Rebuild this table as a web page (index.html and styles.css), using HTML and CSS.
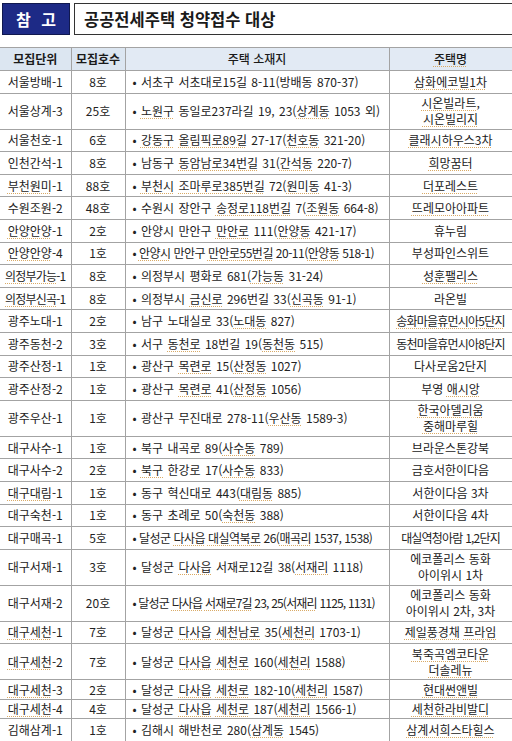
FILE: index.html
```html
<!DOCTYPE html>
<html lang="ko">
<head>
<meta charset="utf-8">
<title>공공전세주택 청약접수 대상</title>
<link rel="stylesheet" href="styles.css">
</head>
<body>
<div class="page">
  <div class="head">
    <div class="tag">참 고</div>
    <div class="title">공공전세주택 청약접수 대상</div>
  </div>
  <table class="list">
    <colgroup>
      <col class="c1"><col class="c2"><col class="c3"><col class="c4">
    </colgroup>
    <thead>
      <tr><th>모집단위</th><th>모집호수</th><th class="th-addr">주택 소재지</th><th class="th-name"><span class="sp">주택명</span></th></tr>
    </thead>
    <tbody>
      <tr><td>서울방배-1</td><td>8호</td><td class="addr">• 서초구 서초대로15길 8-11(방배동 870-37)</td><td><span class="sp">삼화에코빌1차</span></td></tr>
      <tr class="d"><td>서울상계-3</td><td>25호</td><td class="addr">• <span class="sp">노원구</span> 동일로237라길 19, 23(<span class="sp">상계동</span> 1053 외)</td><td><span class="sp">시온빌라트</span>,<br><span class="sp">시온빌리지</span></td></tr>
      <tr><td>서울천호-1</td><td>6호</td><td class="addr">• <span class="sp">강동구</span> <span class="sp">올림픽로89길</span> 27-17(<span class="sp">천호동</span> 321-20)</td><td><span class="sp">클래시하우스3차</span></td></tr>
      <tr><td>인천간석-1</td><td>8호</td><td class="addr">• 남동구 <span class="sp">동암남로34번길</span> 31(<span class="sp">간석동</span> 220-7)</td><td><span class="sp">희망꿈터</span></td></tr>
      <tr><td><span class="sp">부천원미</span>-1</td><td>88호</td><td class="addr">• <span class="sp">부천시</span> <span class="sp">조마루로385번길</span> 72(<span class="sp">원미동</span> 41-3)</td><td><span class="sp">더포레스트</span></td></tr>
      <tr><td>수원조원-2</td><td>48호</td><td class="addr">• 수원시 장안구 <span class="sp">송정로118번길</span> 7(<span class="sp">조원동</span> 664-8)</td><td><span class="sp">뜨레모아아파트</span></td></tr>
      <tr><td><span class="sp">안양안양</span>-1</td><td>2호</td><td class="addr">• 안양시 만안구 <span class="sp">만안로</span> 111(<span class="sp">안양동</span> 421-17)</td><td>휴누림</td></tr>
      <tr><td><span class="sp">안양안양</span>-4</td><td>1호</td><td class="addr tight">• <span class="sp">안양시</span> 만안구 <span class="sp">만안로55번길</span> 20-11(<span class="sp">안양동</span> 518-1)</td><td>부성파인스위트</td></tr>
      <tr><td class="tight"><span class="sp">의정부가능</span>-1</td><td>8호</td><td class="addr">• 의정부시 평화로 681(<span class="sp">가능동</span> 31-24)</td><td><span class="sp">성훈팰리스</span></td></tr>
      <tr><td class="tight"><span class="sp">의정부신곡</span>-1</td><td>8호</td><td class="addr">• 의정부시 <span class="sp">금신로</span> 296번길 33(<span class="sp">신곡동</span> 91-1)</td><td>라온빌</td></tr>
      <tr><td>광주노대-1</td><td>2호</td><td class="addr">• 남구 노대실로 33(<span class="sp">노대동</span> 827)</td><td class="tight"><span class="sp">송화마을휴먼시아5단지</span></td></tr>
      <tr><td>광주동천-2</td><td>3호</td><td class="addr">• 서구 <span class="sp">동천로</span> 18번길 19(<span class="sp">동천동</span> 515)</td><td class="tight">동천마을휴먼시아8단지</td></tr>
      <tr><td>광주산정-1</td><td>1호</td><td class="addr">• 광산구 <span class="sp">목련로</span> 15(<span class="sp">산정동</span> 1027)</td><td>다사로움2단지</td></tr>
      <tr><td>광주산정-2</td><td>1호</td><td class="addr">• 광산구 <span class="sp">목련로</span> 41(<span class="sp">산정동</span> 1056)</td><td>부영 <span class="sp">애시앙</span></td></tr>
      <tr class="d"><td>광주우산-1</td><td>1호</td><td class="addr">• 광산구 무진대로 278-11(<span class="sp">우산동</span> 1589-3)</td><td><span class="sp">한국아델리움</span><br><span class="sp">중해마루힐</span></td></tr>
      <tr><td>대구사수-1</td><td>1호</td><td class="addr">• 북구 내곡로 89(<span class="sp">사수동</span> 789)</td><td>브라운스톤강북</td></tr>
      <tr><td>대구사수-2</td><td>2호</td><td class="addr">• <span class="sp">북구</span> 한강로 17(<span class="sp">사수동</span> 833)</td><td>금호서한이다음</td></tr>
      <tr><td><span class="sp">대구대림</span>-1</td><td>1호</td><td class="addr">• 동구 혁신대로 443(<span class="sp">대림동</span> 885)</td><td>서한이다음 3차</td></tr>
      <tr><td>대구숙천-1</td><td>1호</td><td class="addr">• 동구 초례로 50(<span class="sp">숙천동</span> 388)</td><td>서한이다음 4차</td></tr>
      <tr><td>대구매곡-1</td><td>5호</td><td class="addr tight">• 달성군 <span class="sp">다사읍</span> <span class="sp">대실역북로</span> 26(<span class="sp">매곡리</span> 1537, 1538)</td><td class="tight">대실역청아람 1,2단지</td></tr>
      <tr class="d"><td>대구서재-1</td><td>3호</td><td class="addr">• 달성군 <span class="sp">다사읍</span> 서재로12길 38(<span class="sp">서재리</span> 1118)</td><td>에코폴리스 동화<br>아이위시 1차</td></tr>
      <tr class="d"><td>대구서재-2</td><td>20호</td><td class="addr tighter">• 달성군 <span class="sp">다사읍</span> <span class="sp">서재로7길</span> 23, 25(<span class="sp">서재리</span> 1125, 1131)</td><td>에코폴리스 동화<br>아이위시 2차, 3차</td></tr>
      <tr><td><span class="sp">대구세천</span>-1</td><td>7호</td><td class="addr">• 달성군 <span class="sp">다사읍</span> <span class="sp">세천남로</span> 35(<span class="sp">세천리</span> 1703-1)</td><td><span class="sp">제일풍경채</span> <span class="sp">프라임</span></td></tr>
      <tr class="d"><td><span class="sp">대구세천</span>-2</td><td>7호</td><td class="addr">• 달성군 <span class="sp">다사읍</span> <span class="sp">세천로</span> 160(<span class="sp">세천리</span> 1588)</td><td><span class="sp">북죽곡엠코타운</span><br><span class="sp">더솔레뉴</span></td></tr>
      <tr class="s3"><td><span class="sp">대구세천</span>-3</td><td>2호</td><td class="addr">• 달성군 <span class="sp">다사읍</span> <span class="sp">세천로</span> 182-10(<span class="sp">세천리</span> 1587)</td><td><span class="sp">현대썬앤빌</span></td></tr>
      <tr class="s4"><td><span class="sp">대구세천</span>-4</td><td>4호</td><td class="addr">• 달성군 <span class="sp">다사읍</span> <span class="sp">세천로</span> 187(<span class="sp">세천리</span> 1566-1)</td><td><span class="sp">세천한라비발디</span></td></tr>
      <tr><td>김해삼계-1</td><td>1호</td><td class="addr">• 김해시 해반천로 280(<span class="sp">삼계동</span> 1545)</td><td><span class="sp">삼계서희스타힐스</span></td></tr>
    </tbody>
  </table>
</div>
</body>
</html>
```

FILE: styles.css
```css
html, body {
  margin: 0;
  padding: 0;
  background: #ffffff;
}

body {
  overflow: hidden;
  font-family: "Noto Sans CJK KR", "Noto Sans", sans-serif;
  color: #222222;
}

.page {
  width: 512px;
}

.head {
  display: flex;
  gap: 4px;
  padding: 3px 0 0 2px;
  height: 32px;
}

.tag {
  width: 68px;
  height: 32px;
  box-sizing: border-box;
  background: #1d2a86;
  border: 1px solid #10184f;
  color: #ffffff;
  font-size: 16px;
  font-weight: 700;
  letter-spacing: 3px;
  display: flex;
  align-items: center;
  justify-content: center;
  padding-left: 3px;
}

.title {
  flex: 1;
  height: 32px;
  box-sizing: border-box;
  margin-right: -6px;
  border: 1.5px solid #333333;
  padding-left: 9px;
  font-size: 16.5px;
  font-weight: 700;
  color: #1a1a1a;
  display: flex;
  align-items: center;
}

.list {
  margin-top: 12px;
  width: 512px;
  border-collapse: collapse;
  table-layout: fixed;
  font-size: 12px;
  line-height: 16px;
}

.c1 { width: 71px; }
.c2 { width: 54px; }
.c3 { width: 264px; }
.c4 { width: 123px; }

.list th,
.list td {
  border: 1px solid #a3a3a3;
  padding: 0;
  text-align: center;
  vertical-align: middle;
  white-space: nowrap;
  overflow: hidden;
}

.list th {
  height: 22px;
  background: #dce6f1;
  font-weight: 700;
  color: #1a1a1a;
  font-size: 12px;
}

.list th.th-addr,
.list th.th-name {
  background: #e2eaf4;
  font-weight: 500;
}

.list tr:first-child th:first-child,
.list tr td:first-child {
  border-left: none;
}

.list td.addr {
  text-align: left;
  padding-left: 7px;
  word-spacing: 1px;
}

.list tbody tr { height: 22.6px; }
.list tbody tr.d { height: 36px; }
.list tbody tr.s3 { height: 20px; }
.list tbody tr.s4 { height: 19px; }

.tight {
  letter-spacing: -0.8px;
}

.list td.addr.tight {
  letter-spacing: -0.5px;
  word-spacing: 0;
}

.list td.addr.tighter {
  letter-spacing: -0.8px;
  word-spacing: 0;
}

.sp {
  text-decoration: underline dotted #d9aa66;
  text-decoration-thickness: 1px;
  text-underline-offset: 2px;
}
```
